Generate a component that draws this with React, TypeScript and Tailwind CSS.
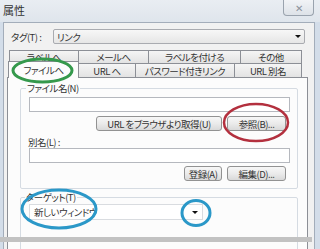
import React from "react";

function Btn({ label, w }: { label: string; w: string }) {
  return (
    <div
      className={`${w} h-[15px] flex items-center justify-center rounded-[3px] border border-[#929292] bg-gradient-to-b from-[#f7f7f7] via-[#ebebeb] to-[#d9d9d9] leading-[12px]`}
    >
      {label}
    </div>
  );
}

function Arrow() {
  return <div className="w-0 h-0 border-l-[3px] border-r-[3px] border-t-[3px] border-l-transparent border-r-transparent border-t-[#111]" />;
}

export default function App() {
  const backTabs = [
    { label: "ラベルへ", w: "w-[70px]" },
    { label: "メールへ", w: "w-[71px]" },
    { label: "ラベルを付ける", w: "w-[93px]" },
    { label: "その他", w: "w-[62px]" },
  ];
  const frontTabs = [
    { label: "URL へ", w: "w-[58px]" },
    { label: "パスワード付きリンク", w: "w-[100px]" },
    { label: "URL 別名", w: "w-[68px]" },
  ];

  return (
    <div className="relative w-[320px] h-[249px] overflow-hidden bg-[#d3dde9] text-[9.5px] tracking-[-0.5px] text-[#333] font-['Noto_Sans_CJK_JP','Noto_Sans',sans-serif] [font-feature-settings:'palt']">
      {/* title bar */}
      <div className="h-[22px] flex items-start justify-between bg-gradient-to-b from-[#e9edf2] to-[#dfe5ec]">
        <div className="ml-[3px] mt-[3px] text-[11px] tracking-normal leading-[14px]">属性</div>
        <div className="mr-[6px] w-[31px] h-[16px] flex items-center justify-center rounded-b-[4px] border border-t-0 border-[#9aa3ae] bg-gradient-to-b from-[#f1f3f6] to-[#dde2e8] text-[#8b929c] text-[10px] leading-[10px]">
          ✕
        </div>
      </div>

      {/* dialog body */}
      <div className="ml-[3px] w-[312px] h-[227px] flex flex-col bg-[#f1f1f1] border-t border-l border-r border-[#a3adba]">
        {/* tag row */}
        <div className="mt-[6px] h-[15px] flex items-center">
          <div className="ml-[7px] w-[42px] leading-[12px]">タグ(T) :</div>
          <div className="w-[252px] h-[15px] flex items-center justify-between border border-[#a9abb0] bg-gradient-to-b from-[#f7f7f7] to-[#e6e6e6] rounded-[2px]">
            <span className="ml-[3px] leading-[12px]">リンク</span>
            <span className="mr-[3px]">
              <Arrow />
            </span>
          </div>
        </div>

        {/* tabs */}
        <div className="mt-[6px] ml-[3px] w-[301px] flex flex-col">
          <div className="flex pl-[2px] h-[13px]">
            {backTabs.map((t, i) => (
              <div
                key={i}
                className={`${t.w} h-[13px] -mr-px flex items-center justify-center border border-b-0 border-[#8c8f96] bg-gradient-to-b from-[#f5f5f5] to-[#e3e3e3] leading-[12px]`}
              >
                {t.label}
              </div>
            ))}
          </div>
          <div className="flex pl-[1px] h-[14px] relative z-10">
            <div className="w-[71px] h-[17px] -mt-[2px] -mr-px flex items-center justify-center border border-b-0 border-[#8c8f96] bg-[#fcfcfc] leading-[12px]">
              ファイルへ
            </div>
            {frontTabs.map((t, i) => (
              <div
                key={i}
                className={`${t.w} h-[14px] -mr-px flex items-center justify-center border border-b-0 border-[#8c8f96] bg-gradient-to-b from-[#f5f5f5] to-[#e3e3e3] leading-[12px]`}
              >
                {t.label}
              </div>
            ))}
          </div>

          {/* tab panel */}
          <div className="h-[180px] flex flex-col border border-[#8c8f96] bg-[#fcfcfc]">
            <fieldset className="mt-[4px] ml-[12px] w-[278px] pb-[7px] border border-[#d5dbe2] rounded-[2px]">
              <legend className="ml-[5px] px-[1px] leading-[12px]">ファイル名(N)</legend>
              <div className="mt-[3px] ml-[8px] w-[261px] h-[15px] border border-[#b5b8be] bg-white" />
              <div className="mt-[4px] ml-[75px] flex gap-[5px]">
                <Btn label="URL をブラウザより取得(U)" w="w-[126px]" />
                <Btn label="参照(B)..." w="w-[59px]" />
              </div>
              <div className="mt-[5px] ml-[7px] leading-[12px]">別名(L) :</div>
              <div className="ml-[8px] w-[261px] h-[15px] border border-[#b5b8be] bg-white" />
              <div className="mt-[3px] ml-[163px] flex gap-[5px]">
                <Btn label="登録(A)" w="w-[38px]" />
                <Btn label="編集(D)..." w="w-[59px]" />
              </div>
            </fieldset>

            <fieldset className="mt-[2px] ml-[12px] w-[278px] h-[60px] border border-[#d5dbe2] rounded-[2px]">
              <legend className="ml-[4px] px-[1px] leading-[12px]">ターゲット(T)</legend>
              <div className="mt-[1px] ml-[8px] w-[174px] h-[16px] flex items-center justify-between border border-[#d9dce0] bg-white">
                <span className="ml-[4px] leading-[12px]">新しいウィンドウ</span>
                <span className="mr-[4px]">
                  <Arrow />
                </span>
              </div>
            </fieldset>
          </div>
        </div>
      </div>

      {/* gray bar across the bottom */}
      <div className="absolute left-0 top-[237px] w-[312px] h-[5px] bg-[#c2c2c2]" />

      {/* hand-drawn marks */}
      <svg className="absolute left-0 top-0 z-20 pointer-events-none" width="320" height="249" viewBox="0 0 320 249">
        <ellipse cx="42.5" cy="70.5" rx="29.5" ry="11.5" fill="none" stroke="#35994c" strokeWidth="3" />
        <ellipse cx="256" cy="122.5" rx="32" ry="18.5" fill="none" stroke="#b3303e" strokeWidth="2.5" />
        <ellipse cx="59" cy="209" rx="37" ry="19" fill="none" stroke="#2b98c8" strokeWidth="3" />
        <ellipse cx="196" cy="213" rx="14" ry="12.5" fill="none" stroke="#2b98c8" strokeWidth="3" />
      </svg>
    </div>
  );
}
